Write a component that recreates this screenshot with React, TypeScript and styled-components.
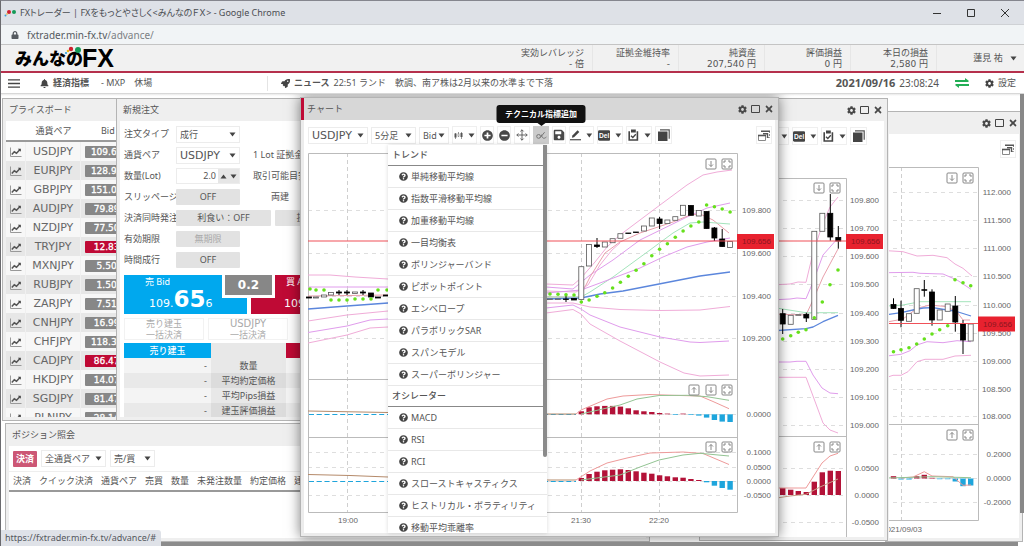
import React from 'react';
import styled, { createGlobalStyle, css } from 'styled-components';
import {
  FaBell,
  FaCog,
  FaLock,
  FaMinusCircle,
  FaPlusCircle,
  FaQuestionCircle,
  FaRocket,
  FaSave,
  FaTimes,
} from 'react-icons/fa';

const jp = `"Noto Sans", "Noto Sans CJK JP", sans-serif`;
const wide = `"DejaVu Sans", "Noto Sans CJK JP", sans-serif`;
const axisFont = `"Liberation Sans", sans-serif`;

const color = {
  text: '#555',
  dark: '#484848',
  blue: '#00a8ee',
  red: '#bf0a35',
  grey: '#878787',
  panel: '#efefef',
  button: '#e2e2e2',
  line: '#b4b4b4',
};

const GlobalStyle = createGlobalStyle`
  * { box-sizing: border-box; }
  body { margin: 0; background: #fff; }
  button, select, input { font: inherit; color: inherit; margin: 0; }
  ul, h2, h3, p { margin: 0; padding: 0; font-size: inherit; }
  ul { list-style: none; }
`;

/* ---------- page shell ---------- */

const Page = styled.div`
  display: flex;
  flex-direction: column;
  height: 100vh;
  overflow: hidden;
  border-left: 1px solid #6a6a6e;
  border-top: 1px solid #85868e;
  font: 9px/12px ${jp};
  color: ${color.text};
  background: #fff;
`;

const TitleBar = styled.div`
  display: flex;
  align-items: center;
  height: 24px;
  flex: none;
  padding: 0 13px 0 3px;
  background: #dee1e7;
  border-bottom: 1px solid #cfd1d5;
`;

const PageTitle = styled.div`
  flex: 1;
  margin-left: 3px;
  white-space: nowrap;
  color: #4a4d52;
  font-feature-settings: 'palt';
`;

const CaptionButtons = styled.div`
  display: flex;
  gap: 22px;
`;

const Plain = styled.button`
  display: flex;
  align-items: center;
  justify-content: center;
  padding: 0;
  border: 0;
  background: none;
`;

const AddressBar = styled.div`
  display: flex;
  align-items: center;
  gap: 8px;
  height: 20px;
  flex: none;
  padding-left: 10px;
  background: #f1f4f6;
  border-bottom: 1px solid #c4c4c4;
  font-size: 10px;
  color: #555a60;
`;

const Muted = styled.span`
  color: #7b7f84;
`;

const Header = styled.header`
  display: flex;
  align-items: center;
  height: 28px;
  flex: none;
  background: #f1f1f1;
  border-bottom: 2px solid #b5304c;
`;

const Logo = styled.a`
  display: flex;
  align-items: flex-end;
  position: relative;
  margin-left: 14px;
  color: #000;
  text-decoration: none;
  font: 900 17px/24px ${jp};
`;

const LogoFx = styled.span`
  font: 700 25px/26px ${axisFont};
  margin-left: -1px;
`;

const LogoDots = styled.svg`
  position: absolute;
  left: 48px;
  top: 0;
`;

const Stats = styled.div`
  display: flex;
  margin-left: auto;
  height: 100%;
`;

const Stat = styled.div`
  width: 86px;
  padding: 3px 8px 0 0;
  border-right: 1px solid #e6e6e6;
  text-align: right;
  white-space: nowrap;
  line-height: 11px;
  font-family: ${wide};
`;

const UserButton = styled(Plain)`
  width: 87px;
  padding: 0 7px 0 36px;
  gap: 7px;
  white-space: nowrap;
`;

const NewsBar = styled.div`
  display: flex;
  align-items: center;
  height: 21px;
  flex: none;
  padding: 0 8px 0 7px;
  border-bottom: 1px solid #d8d8d8;
  white-space: nowrap;
`;

const NewsItem = styled.div<{ $left: number }>`
  display: flex;
  align-items: center;
  gap: 4px;
  margin-left: ${(p) => p.$left}px;
`;

const NewsRegion = styled.div`
  display: flex;
  align-items: center;
  height: 15px;
  width: 247px;
`;

const NewsFeed = styled(NewsRegion)`
  flex: 1;
  border-left: 1px solid #e4e4e4;
  width: auto;
`;

const Clock = styled.div`
  display: flex;
  gap: 4px;
  font-size: 10px;
  b {
    font-size: 11px;
  }
`;

const GearButton = styled(Plain)`
  gap: 4px;
  margin-left: 16px;
`;

/* ---------- desktop and windows ---------- */

const Desktop = styled.main`
  position: relative;
  flex: 1;
  min-height: 0;
  overflow: hidden;
  background: linear-gradient(#e9e9e9, #fff 2px);
`;

const Win = styled.section<{
  $x: number;
  $y: number;
  $w: number;
  $h: number;
  $active?: boolean;
}>`
  position: absolute;
  left: ${(p) => p.$x}px;
  top: ${(p) => p.$y}px;
  width: ${(p) => p.$w}px;
  height: ${(p) => p.$h}px;
  display: flex;
  flex-direction: column;
  padding: 0 3px 3px;
  border: 1px solid ${color.line};
  background: ${color.panel};
  ${(p) =>
    p.$active &&
    css`
      background: #ececec;
      box-shadow: 0 0 12px rgba(0, 0, 0, 0.5);
    `}
`;

const WinHead = styled.div<{ $active?: boolean }>`
  display: flex;
  align-items: center;
  height: 22px;
  flex: none;
  margin: 0 -3px;
  padding: 0 4px 0 6px;
  color: #555;
  ${(p) =>
    p.$active &&
    css`
      background: #d7d7d7;
      border-left: 3px solid ${color.red};
      padding-left: 3px;
    `}
  h2 {
    flex: 1;
    font-weight: 400;
  }
`;

const WinActions = styled.div`
  display: flex;
  gap: 4px;
  color: ${color.dark};
`;

const WinBody = styled.div`
  flex: 1;
  min-height: 0;
  overflow: hidden;
  background: #fff;
`;

const WinBodyOpen = styled(WinBody)`
  overflow: visible;
`;

/* ---------- scrollbars ---------- */

const VThumb = styled.div`
  position: absolute;
  right: 0;
  top: 0;
  width: 4px;
  height: 419px;
  background: #888;
`;

const HThumb = styled.div`
  position: absolute;
  left: 0;
  right: 6px;
  bottom: 0;
  height: 4px;
  background: #8c8c8c;
`;

const StatusBubble = styled.div`
  position: absolute;
  left: 0;
  bottom: 0;
  height: 16px;
  padding: 0 5px 0 4px;
  border-radius: 0 3px 0 0;
  background: #dfe2e8;
  line-height: 16px;
  color: #55585e;
`;

/* ---------- form controls ---------- */

const SelectBox = styled.span<{ $w: number }>`
  display: grid;
  align-items: center;
  width: ${(p) => p.$w}px;
  height: 17px;
  border: 1px solid #ececec;
  background: #fff;
  & > * {
    grid-area: 1 / 1;
  }
  svg {
    justify-self: end;
    margin-right: 3px;
    pointer-events: none;
  }
`;

const BareSelect = styled.select<{ $wide?: boolean }>`
  appearance: none;
  width: 100%;
  height: 15px;
  padding: 0 0 0 3px;
  border: 0;
  background: none;
  font-family: ${(p) => (p.$wide ? wide : jp)};
  font-size: ${(p) => (p.$wide ? 11 : 9)}px;
  line-height: 15px;
`;

const Caret = ({ up }: { up?: boolean }) => (
  <svg width="7" height="5" viewBox="0 0 7 5" aria-hidden="true">
    <path d={up ? 'M0.5 4.5h6L3.5 0.5z' : 'M0.5 0.5h6L3.5 4.5z'} fill="#444" />
  </svg>
);

type PickProps = { label: string; value: string; w: number; wide?: boolean };
const Pick = ({ label, value, w, wide: isWide }: PickProps) => (
  <SelectBox $w={w}>
    <BareSelect aria-label={label} $wide={isWide} defaultValue={value}>
      <option>{value}</option>
    </BareSelect>
    <Caret />
  </SelectBox>
);

/* ---------- price board ---------- */

const BoardTable = styled.table`
  width: 132px;
  table-layout: fixed;
  border-collapse: separate;
  border-spacing: 0;
  th {
    height: 21px;
    padding: 0;
    font-weight: 400;
    border-bottom: 2px solid #9a9a9a;
  }
  th:last-child {
    text-align: left;
    padding-left: 20px;
  }
  td {
    height: 19px;
    padding: 0;
    border-right: 1px solid #f0f0f0;
  }
  tbody tr:nth-child(odd) {
    background: #f7f7f7;
  }
  tbody tr:nth-child(even) {
    background: #e7e7e7;
  }
`;

const IconCell = styled.td`
  svg {
    display: block;
    margin: 0 auto;
  }
`;

const PairCell = styled.td`
  font: 11px/14px ${wide};
  text-align: center;
  color: #666;
`;

const Quote = styled.div<{ $down?: boolean }>`
  width: 49px;
  height: 12px;
  margin-left: 4px;
  border-radius: 1px;
  background: ${(p) => (p.$down ? color.red : color.grey)};
  color: #fff;
  text-align: center;
  font: 9px/12px ${wide};
  -webkit-text-stroke: 0.3px #fff;
`;

const quotes: [string, string, boolean?][] = [
  ['USDJPY', '109.656'],
  ['EURJPY', '128.978'],
  ['GBPJPY', '151.006'],
  ['AUDJPY', '79.898'],
  ['NZDJPY', '77.506'],
  ['TRYJPY', '12.835', true],
  ['MXNJPY', '5.505'],
  ['RUBJPY', '1.507'],
  ['ZARJPY', '7.510'],
  ['CNHJPY', '16.995'],
  ['CHFJPY', '118.371'],
  ['CADJPY', '86.472', true],
  ['HKDJPY', '14.075'],
  ['SGDJPY', '81.473'],
  ['PLNJPY', '28.142'],
];

/* ---------- order form ---------- */

const OrderForm = styled.form`
  display: flex;
  flex-direction: column;
  gap: 5px;
  padding: 5px 4px 0;
`;

const FormRow = styled.div`
  display: flex;
  align-items: center;
  height: 16px;
  white-space: nowrap;
`;

const FieldLabel = styled.label`
  width: 52px;
  flex: none;
`;

const Side = styled.span<{ $left: number }>`
  margin-left: ${(p) => p.$left}px;
`;

const Toggle = styled.button<{ $w: number; $off?: boolean }>`
  flex: none;
  width: ${(p) => p.$w}px;
  height: 16px;
  padding: 0;
  border: 0;
  border-radius: 1px;
  background: ${color.button};
  color: ${(p) => (p.$off ? '#aaa' : color.text)};
  & + & {
    margin-left: 4px;
  }
`;

const LotBox = styled.span`
  display: flex;
  width: 64px;
  height: 16px;
  border: 1px solid #ececec;
  input {
    width: 41px;
    padding: 0 2px;
    border: 0;
    text-align: right;
    background: none;
  }
`;

const Stepper = styled.span`
  display: flex;
  flex: 1;
  align-items: center;
  justify-content: space-around;
  background: #e6e6e6;
`;

const Deal = styled.div`
  display: flex;
  position: relative;
  gap: 4px;
  margin-top: 2px;
`;

const DealButton = styled.button<{ $side: 'sell' | 'buy' }>`
  flex: none;
  width: 123px;
  height: 39px;
  padding: 0 0 0 21px;
  border: 0;
  background: ${(p) => (p.$side === 'sell' ? color.blue : color.red)};
  color: #fff;
  text-align: left;
`;

const DealName = styled.span<{ $indent?: boolean }>`
  display: block;
  line-height: 14px;
  margin-left: ${(p) => (p.$indent ? 14 : 0)}px;
`;

const DealPrice = styled.span<{ $indent?: boolean }>`
  display: block;
  margin-left: ${(p) => (p.$indent ? 12 : 4)}px;
  font: 11px/20px ${wide};
  strong {
    font-size: 23px;
  }
`;

const Spread = styled.span`
  position: absolute;
  left: 98px;
  top: -3px;
  width: 53px;
  height: 26px;
  border: 3px solid #fff;
  background: ${color.grey};
  color: #fff;
  text-align: center;
  font: 700 12px/20px ${wide};
`;

const BulkRow = styled.div`
  display: flex;
  gap: 4px;
  margin-top: -1px;
`;

const BulkButton = styled.button`
  display: flex;
  flex: none;
  flex-direction: column;
  align-items: center;
  justify-content: center;
  width: 80px;
  height: 22px;
  padding: 0;
  border: 0;
  outline: 1px solid #f2f2f2;
  outline-offset: -1px;
  background: #fff;
  color: #aaa;
  line-height: 11px;
`;

const WidePair = styled.span`
  font: 10px/11px ${wide};
`;

const Holding = styled.table`
  width: 248px;
  margin-top: -2px;
  table-layout: fixed;
  border-spacing: 0;
  th,
  td {
    height: 15px;
    padding: 0;
    font-weight: 400;
    text-align: center;
    line-height: 12px;
    background: #e8e8e8;
  }
  thead th:first-child {
    background: ${color.blue};
    color: #fff;
    font-weight: 500;
  }
  thead th:last-child {
    background: ${color.red};
    color: #fff;
  }
  td {
    text-align: right;
    padding-right: 4px;
    background: #f4f4f4;
  }
  tbody tr:nth-child(even) td {
    background: #e9e9e9;
  }
  tbody tr:nth-child(even) th {
    background: #dcdcdc;
  }
`;

/* ---------- positions ---------- */

const Filters = styled.div`
  display: flex;
  align-items: center;
  gap: 4px;
  height: 25px;
  padding-left: 4px;
`;

const CloseButton = styled.button`
  width: 24px;
  height: 16px;
  padding: 0;
  border: 0;
  border-radius: 1px;
  background: #cc5775;
  color: #fff;
  font-weight: 700;
`;

const PositionTable = styled.table`
  width: 100%;
  border-spacing: 0;
  border-top: 1px solid #eee;
  border-bottom: 2px solid #999;
  th {
    height: 18px;
    padding: 0 8px 0 0;
    font-weight: 400;
    text-align: left;
    white-space: nowrap;
  }
  th:first-child {
    padding-left: 4px;
  }
  th:last-child {
    width: 100%;
  }
`;

/* ---------- chart toolbar, menu and tooltip ---------- */

const Toolbar = styled.div`
  display: flex;
  align-items: center;
  gap: 3px;
  height: 28px;
  padding: 2px 3px 0 4px;
`;

const Lead = styled.span`
  width: 54px;
`;

const Spacer = styled.span`
  flex: 1;
`;

const Tool = styled.button<{ $w?: number; $on?: boolean }>`
  position: relative;
  display: flex;
  flex: none;
  align-items: center;
  justify-content: center;
  gap: 5px;
  width: ${(p) => p.$w ?? 16}px;
  height: 18px;
  padding: 0;
  border: 1px solid ${(p) => (p.$on ? '#cbcbcb' : '#efefef')};
  background: ${(p) => (p.$on ? '#cbcbcb' : '#fff')};
  color: ${color.dark};
`;

const Tip = styled.span`
  position: absolute;
  left: 50%;
  bottom: 20px;
  transform: translateX(-50%);
  width: 89px;
  border-radius: 3px;
  background: #111;
  color: #fff;
  font: 700 8px/18px ${jp};
  white-space: nowrap;
  &::after {
    content: '';
    position: absolute;
    left: 41px;
    top: 18px;
    border: 4px solid transparent;
    border-top: 3px solid #111;
    border-bottom: 0;
  }
`;

const Menu = styled.div`
  position: absolute;
  left: 87px;
  top: 47px;
  width: 159px;
  height: 388px;
  overflow: hidden;
  background: #fff;
  box-shadow: 0 0 4px rgba(0, 0, 0, 0.15);
  h3 {
    height: 21px;
    padding: 0 4px;
    border-bottom: 1px solid #888;
    font-weight: 500;
    line-height: 19px;
  }
`;

const MenuItem = styled.button`
  display: flex;
  align-items: center;
  gap: 3px;
  width: 100%;
  height: 22px;
  padding: 0 0 0 11px;
  border: 0;
  border-bottom: 1px solid #e8e8e8;
  background: none;
  white-space: nowrap;
`;

const MenuThumb = styled.div`
  position: absolute;
  right: 0;
  top: 0;
  width: 4px;
  height: 312px;
  border-radius: 0 0 2px 2px;
  background: #8a8a8a;
`;

const ChartSvg = styled.svg`
  display: block;
  flex: none;
  font: 8px ${axisFont};
`;

const ChartCrop = styled.div`
  display: flex;
  justify-content: flex-end;
`;

/* ---------- icons ---------- */

const TrendIcon = () => (
  <svg width="12" height="10" viewBox="0 0 12 10" fill="none" stroke="#555">
    <path d="M0.500 0.500v9h11" stroke="#999" />
    <path d="M1.800 7.500L4.300 4.800l2.200 1.400L10 2.500" strokeWidth="1.500" />
    <path d="M7.800 1.700h3v3z" fill="#444" stroke="none" />
  </svg>
);

const BoxIcon = () => (
  <svg width="9" height="8" viewBox="0 0 9 8">
    <path d="M0.5 0.5h8v7h-8z" fill="none" stroke="#444" />
  </svg>
);

const CandleIcon = () => (
  <svg width="9" height="9" viewBox="0 0 9 9">
    <path d="M1.500 2v6M4.500 1v5M7.500 1v7" stroke="#999" />
    <path d="M0.500 2.500h2v4h-2zM6.500 2h2v4h-2z" fill="#555" />
    <path d="M4 2.500h1v3H4z" fill="#fff" stroke="#777" strokeWidth=".6" />
  </svg>
);

const MoveIcon = () => (
  <svg width="12" height="12" viewBox="0 0 12 12" fill="none" stroke="#555" strokeWidth=".9">
    <path d="M6 0.8v10.4M0.8 6h10.4" />
    <path d="M4.4 2.4L6 .8l1.600 1.600M4.400 9.600L6 11.200l1.600-1.600M2.400 4.400L.8 6l1.600 1.600M9.600 4.400L11.200 6 9.600 7.600" />
  </svg>
);

const IndicatorIcon = () => (
  <svg width="11" height="9" viewBox="0 0 11 9" fill="none" stroke="#777">
    <circle cx="2.600" cy="5.400" r="1.900" />
    <path d="M4.300 6.600L8.600 1.200M5.400 3.600c.4 2.600 1.600 4 3 3.600 1-.3 1.500-.8 2-1.200" />
  </svg>
);

const PencilIcon = () => (
  <svg width="12" height="12" viewBox="0 0 12 12">
    <path d="M2 8.800L2.500 6.500 8 1l1.800 1.800L4.300 8.300z" fill="#444" />
    <path d="M0 11h12" stroke="#444" strokeWidth="1.200" />
  </svg>
);

const DelIcon = () => (
  <svg width="13" height="11" viewBox="0 0 13 11">
    <rect width="13" height="11" rx="1.500" fill="#444" />
    <text x="6.500" y="8" fill="#fff" fontSize="7" fontWeight="700" textAnchor="middle" fontFamily="Liberation Sans, sans-serif">
      Del
    </text>
  </svg>
);

const ClipIcon = () => (
  <svg width="11" height="12" viewBox="0 0 11 12">
    <path d="M1.200 2.200v8.800h8.200V2.200" fill="none" stroke="#444" strokeWidth="1.600" />
    <path d="M3 0.500h4.800v3H3z" fill="#444" />
    <path d="M3 6.800l1.800 1.700 3-3.300" fill="none" stroke="#444" strokeWidth="1.300" />
  </svg>
);

const StackIcon = () => (
  <svg width="12" height="12" viewBox="0 0 12 12">
    <path d="M0 2.500h9.500V12H0z" fill="#444" />
    <path d="M2 .8h9.200v9" fill="none" stroke="#555" strokeWidth="1.200" />
  </svg>
);

const TileIcon = () => (
  <svg width="12" height="11" viewBox="0 0 12 11" fill="none" stroke="#888">
    <path d="M0.500 5.500h7v5h-7z" />
    <path d="M0 5.500h8" stroke="#555" strokeWidth="1.600" />
    <path d="M11.500 1v6.500H9.500" strokeDasharray="2 1" />
    <path d="M3 1.200h9M5 3.700h4.500V8" stroke="#555" strokeWidth="1.400" />
  </svg>
);

const ArrowsIcon = () => (
  <svg width="14" height="10" viewBox="0 0 14 10" fill="#22ae55">
    <path d="M0 2h10V0l4 2.900-1 1H0zM14 8H4v2L0 7.100l1-1h13z" />
  </svg>
);

/* ---------- chart drawing ---------- */

type Pt = [number, number];
type Candle = { x: number; top: number; bottom: number; hi?: number; lo?: number; up?: boolean };

const hollow = (x: number, top: number, bottom: number): Candle => ({ x, top, bottom, up: true });
const solid = (x: number, top: number, bottom: number, hi = top, lo = bottom): Candle => ({ x, top, bottom, hi, lo });

const pink = '#f0acd8';
const violet = '#e09cec';
const rose = '#e8a0ac';
const mint = '#a4e4bc';
const blueLine = '#5b86dc';

const Curve = ({ pts, c, w = 1 }: { pts: Pt[]; c: string; w?: number }) => (
  <polyline points={pts.map((p) => p.join(',')).join(' ')} fill="none" stroke={c} strokeWidth={w} strokeLinejoin="round" />
);

const Dots = ({ pts }: { pts: Pt[] }) => (
  <g fill="#66e01c">
    {pts.map(([x, y]) => (
      <circle key={`${x}-${y}`} cx={x} cy={y} r="1.800" />
    ))}
  </g>
);

const Candles = ({ items }: { items: Candle[] }) => (
  <g>
    {items.map((k) => (
      <g key={k.x}>
        {!k.up && <path d={`M${k.x} ${k.hi}V${k.lo}`} stroke="#000" />}
        <rect
          x={k.x - 2.5}
          y={k.top}
          width="5"
          height={Math.max(0.5, k.bottom - k.top)}
          fill={k.up ? '#fff' : '#000'}
          stroke={k.up ? '#555' : '#000'}
          strokeWidth=".8"
        />
      </g>
    ))}
  </g>
);

const Bars = ({ zero, items }: { zero: number; items: Pt[] }) => (
  <g>
    {items.map(([x, v]) => (
      <rect
        key={x}
        x={x - 2.7}
        width="5.400"
        y={v < 0 ? zero : zero - v}
        height={Math.abs(v)}
        fill={v < 0 ? '#1ea5dc' : '#b31238'}
      />
    ))}
  </g>
);

const HGrid = ({ x1, x2, ys }: { x1: number; x2: number; ys: number[] }) => (
  <path d={ys.map((y) => `M${x1} ${y}H${x2}`).join('')} stroke="#dedede" strokeDasharray="4 4" />
);

const VGrid = ({ y1, y2, xs }: { y1: number; y2: number; xs: number[] }) => (
  <path d={xs.map((x) => `M${x} ${y1}V${y2}`).join('')} stroke="#cfcfcf" strokeDasharray="4 3" />
);

const AxisLabels = ({ x, items }: { x: number; items: [string, number][] }) => (
  <g fill="#666" textAnchor="end">
    {items.map(([t, y]) => (
      <text key={t + y} x={x} y={y + 3}>
        {t}
      </text>
    ))}
  </g>
);

const PaneButton = ({ x, y, kind }: { x: number; y: number; kind: 'up' | 'down' | 'full' }) => (
  <g transform={`translate(${x - 5.5} ${y - 5.5})`} fill="none" stroke="#888">
    <rect x=".5" y=".5" width="10" height="10" rx="1" fill="#fff" />
    {kind === 'up' && <path d="M5.500 8.500V3M3.500 5l2-2 2 2" />}
    {kind === 'down' && <path d="M5.500 2.500V8M3.500 6l2 2 2-2" />}
    {kind === 'full' && <path d="M2.500 4.500v-2h2M6.500 2.500h2v2M8.500 6.500v2h-2M4.500 8.500h-2v-2" />}
  </g>
);

const LastPrice = ({ x1, x2, y }: { x1: number; x2: number; y: number }) => (
  <g>
    <path d={`M${x1} ${y}H${x2}`} stroke="#f05058" strokeWidth="1.200" />
    <rect x={x2} y={y - 7} width="37" height="15" fill="#e8222f" />
    <text x={x2 + 34} y={y + 3} textAnchor="end" fill="#8c1620">
      109.656
    </text>
  </g>
);

const step = (i: number) => Math.round((581.3 + i * 7.83) * 10) / 10;

const MainChart = () => (
  <ChartSvg width="470" height="384" viewBox="304 148 470 384" role="img" aria-label="USDJPY 5分足">
    <HGrid x1={308} x2={737} ys={[210.5, 253.5, 296.5, 338.5, 414.5, 452.5, 467.5, 481.5, 495.5]} />
    <VGrid y1={153} y2={512} xs={[347.5, 581.5, 659.5]} />
    <path d="M308.500 512.500V153.500H737.500V512.500ZM308 379.500H737M308 437.500H737" fill="none" stroke="#bbb" />
    <Curve c={pink} pts={[[308, 275], [330, 275], [355, 277], [388, 279], [546, 284], [573, 285], [581, 278], [595, 262], [607, 247], [620, 235], [640, 220], [660, 205], [687, 185], [703, 175], [717, 172], [732, 170]]} />
    <Curve c={violet} pts={[[308, 287], [388, 287], [546, 287], [573, 289], [590, 275], [613, 260], [640, 240], [687, 217], [707, 208], [730, 203]]} />
    <Curve c={rose} pts={[[308, 296], [388, 295], [546, 297], [580, 297], [590, 277], [605, 253], [620, 242], [640, 233], [673, 222], [690, 215], [700, 214], [713, 220], [729, 233]]} />
    <Curve c={pink} pts={[[546, 291], [576, 292], [588, 285], [600, 265], [612, 250], [620, 243]]} />
    <Curve c={mint} pts={[[546, 297], [581, 297], [590, 292], [613, 277], [650, 250], [673, 233], [690, 223], [703, 222], [730, 224]]} />
    <Curve c={violet} pts={[[546, 293], [581, 290], [600, 283], [640, 268], [663, 257], [687, 247], [707, 242], [730, 238]]} />
    <Curve c={blueLine} w={1.3} pts={[[308, 309], [347, 306], [388, 303], [546, 299], [581, 298], [600, 294], [623, 291], [659, 284], [700, 276], [730, 272]]} />
    <Curve c={pink} pts={[[308, 321], [347, 315], [388, 311], [546, 303], [573, 303], [590, 307], [620, 309.5], [660, 310.5], [700, 310], [730, 306.5]]} />
    <Curve c={violet} pts={[[308, 332.5], [347, 326], [370, 320], [388, 319], [546, 308], [573, 305], [581, 309], [590, 315], [620, 327], [660, 337], [690, 342], [700, 342.5], [729, 341]]} />
    <Curve c={pink} pts={[[308, 343], [347, 335], [370, 328], [388, 327], [546, 313], [573, 309.5], [581, 314], [590, 324], [620, 341], [660, 362], [684, 373], [700, 376], [729, 375]]} />
    <Candles
      items={[
        solid(309, 297, 298), hollow(316, 297, 298), hollow(324, 295, 297), hollow(331, 292.5, 295),
        solid(339, 292, 293, 290, 295), solid(347, 292, 293, 290, 295), hollow(355, 292, 293.5), solid(363, 292, 293, 290, 295),
        solid(371, 293, 297), solid(378, 297, 298), solid(386, 295, 296),
        hollow(550, 299, 299.5), hollow(558, 299, 299.5), solid(566, 299, 299.5, 295, 302), solid(574, 298.5, 300),
        hollow(step(0), 266.7, 299.5), hollow(step(1), 244.5, 266), solid(step(2), 245, 246.5, 238, 248),
        hollow(step(3), 242, 247), hollow(step(4), 238.7, 242.7), hollow(step(5), 233.7, 238.3),
        solid(step(6), 233, 233.5), solid(step(7), 232, 232.5), hollow(step(8), 226, 231), hollow(step(9), 218, 226),
        solid(step(10), 219, 223.5, 217, 229), hollow(step(11), 220, 223.5), hollow(step(12), 216.7, 220.3),
        hollow(step(13), 205.3, 215.3), solid(step(14), 205.5, 215.3), hollow(step(15), 210.5, 216),
        solid(step(16), 211.5, 228.5), solid(step(17), 228, 238, 227, 241), solid(step(18), 239, 246.5, 229, 247), hollow(step(19), 241.5, 247.5),
      ]}
    />
    <Dots
      pts={[
        [310, 289], [316, 290], [324, 290], [331, 300], [339, 300], [347, 300], [355, 299], [363, 299], [371, 299], [378, 290], [387, 290],
        [550, 294], [558, 294.3], [566, 294.7], [574, 295],
        [step(0), 302], [step(1), 300], [step(2), 296.3], [step(3), 292.7], [step(4), 288], [step(5), 282.3], [step(6), 276.3],
        [step(7), 270.3], [step(8), 263.7], [step(9), 255.7], [step(10), 249.3], [step(11), 243.7], [step(12), 237.3],
        [step(13), 231], [step(14), 226], [step(15), 222], [step(16), 205], [step(17), 206.7], [step(18), 209], [step(19), 212],
      ]}
    />
    <path d="M309 414.500H576M309 481.500H576" stroke="#1ea5dc" strokeWidth="1.200" strokeDasharray="5 2.800" />
    <Bars
      zero={414.3}
      items={[3, 7, 8, 8.4, 8.4, 7.7, 6, 4, 3, 2.3, 1.3, 0.7, -0.7, 0.7, -0.7, -1.3, -3.3, -5.7, -7.3, -7.7].map((v, i): Pt => [step(i), v])}
    />
    <Bars
      zero={481}
      items={[3, 7, 9.3, 10.7, 11.3, 11.7, 11, 9.7, 8.3, 7.3, 5.7, 4.7, 3.7, 3.3, 2, 1, -1.3, -4.7, -7, -8.7].map((v, i): Pt => [step(i), v])}
    />
    <Curve c="#b58a6a" pts={[[308, 411], [388, 412.5], [546, 414], [576, 414]]} />
    <Curve c="#ee9a9a" pts={[[576, 414], [581, 410], [607, 399], [623, 396], [650, 394.5], [673, 395.3], [700, 396], [713, 401.5], [729, 408.7]]} />
    <Curve c="#93c493" pts={[[581, 414], [620, 405], [637, 399], [659, 395.5], [687, 395.3], [707, 396.7], [729, 400.3]]} />
    <Curve c="#b58a6a" pts={[[308, 474.5], [350, 475.5], [388, 477], [546, 480], [576, 480]]} />
    <Curve c="#ee9a9a" pts={[[576, 480], [590, 471], [607, 463], [627, 458], [650, 453], [683, 452], [703, 453.5], [729, 464.5]]} />
    <Curve c="#93c493" pts={[[581, 480], [620, 475], [640, 467], [659, 460], [683, 455], [700, 453.3], [729, 456]]} />
    <PaneButton x={711} y={164} kind="down" />
    <PaneButton x={727} y={164} kind="full" />
    <PaneButton x={694} y={390} kind="up" />
    <PaneButton x={711} y={390} kind="down" />
    <PaneButton x={727} y={390} kind="full" />
    <PaneButton x={711} y={447} kind="up" />
    <PaneButton x={727} y={447} kind="full" />
    <AxisLabels
      x={771}
      items={[['109.800', 210], ['109.600', 253], ['109.400', 296], ['109.200', 338], ['0.0000', 414], ['0.1000', 452], ['0.0500', 467], ['0.0000', 481], ['-0.0500', 495]]}
    />
    <LastPrice x1={308} x2={737} y={241} />
    <g fill="#666" textAnchor="middle">
      <text x="348" y="523">19:00</text>
      <text x="581" y="523">21:30</text>
      <text x="659" y="523">22:20</text>
    </g>
  </ChartSvg>
);

const SecondChart = () => (
  <ChartSvg width="180" height="389" viewBox="703 149 180 389" role="img" aria-label="USDJPY 1時間足">
    <HGrid x1={703} x2={846} ys={[200.5, 228.5, 256.5, 284.5, 313.5, 341.5, 369.5, 397.5, 425.5, 468.5, 495.5, 522.5]} />
    <path d="M703 178.500H846.500V538M703 436.500H846" fill="none" stroke="#bbb" />
    <Curve c={pink} pts={[[770, 285], [790, 284], [798, 282], [806, 282.3], [813, 253], [823, 223], [830, 207], [838, 197]]} />
    <Curve c={violet} pts={[[770, 300], [790, 299], [797, 298], [806, 298.7], [813, 282], [823, 255], [838, 238]]} />
    <Curve c={rose} pts={[[770, 314], [806, 315], [813, 300], [823, 277], [838, 249]]} />
    <Curve c={mint} pts={[[770, 307], [806, 312.7], [838, 312.7]]} />
    <Curve c={blueLine} w={1.3} pts={[[770, 331], [806, 328.7], [813, 327], [823, 321.7], [838, 315.3]]} />
    <Curve c={violet} pts={[[770, 362], [790, 362], [797, 361.3], [806, 361.3], [813, 375], [822, 388], [830, 393], [838, 393.7]]} />
    <Curve c={pink} pts={[[770, 377.3], [806, 377.3], [813, 396], [823, 423], [830, 430], [838, 433]]} />
    <Candles
      items={[
        solid(782.7, 313.7, 324, 309, 334), hollow(790.7, 315.3, 324.3), hollow(798.3, 314.7, 315.3),
        solid(806.3, 314.3, 318, 312.7, 322), hollow(814.3, 231.3, 319.3), hollow(822.3, 213.3, 231.3),
        solid(830.3, 213.3, 237, 194, 240.7), solid(838.3, 237.5, 241, 226, 248.7),
      ]}
    />
    <Dots pts={[[782.7, 339], [790.7, 335.7], [798.3, 332.3], [806, 329.7], [814.3, 317.7], [822.3, 302], [830, 284.7], [838, 270]]} />
    <Bars zero={495} items={[[782.7, 7], [790.7, 5.3], [798.3, 4], [806.3, 3], [814.3, 13.3], [822.3, 22.7], [830.3, 24.3], [838.3, 24]]} />
    <Curve c="#ee9a9a" pts={[[770, 488], [806, 488], [813, 477], [822, 463], [830, 456], [838, 453.3]]} />
    <Curve c="#c9a08a" pts={[[770, 499], [790, 496], [806, 494.3], [820, 487], [838, 479]]} />
    <PaneButton x={819} y={188} kind="down" />
    <PaneButton x={835} y={188} kind="full" />
    <PaneButton x={819} y={447} kind="up" />
    <PaneButton x={835} y={447} kind="full" />
    <AxisLabels
      x={879}
      items={[['109.800', 200], ['109.700', 228], ['109.600', 256], ['109.500', 284], ['109.400', 313], ['109.300', 341], ['109.200', 369], ['109.100', 397], ['109.000', 425], ['0.0500', 468], ['0.0000', 495], ['-0.0500', 522]]}
    />
    <LastPrice x1={703} x2={846} y={241} />
  </ChartSvg>
);

const ThirdChart = () => (
  <ChartSvg width="158" height="380" viewBox="861 162 158 380" role="img" aria-label="USDJPY 日足">
    <HGrid x1={861} x2={978} ys={[192.5, 220.5, 248.5, 276.5, 305.5, 333.5, 361.5, 389.5, 416.5, 454.5, 478.5, 502.5]} />
    <VGrid y1={167} y2={520} xs={[901.5]} />
    <path d="M861 167.500H978.500V520.500H861M861 424.500H978" fill="none" stroke="#bbb" />
    <Curve c={pink} pts={[[887, 250.7], [903, 251.7], [917, 256], [933, 255.3], [947, 257.7], [955, 264], [963, 268.3], [972, 276]]} />
    <Curve c={violet} pts={[[887, 272.7], [913, 272.3], [920, 273.3], [943, 274], [957, 280], [971, 289.3]]} />
    <Curve c={mint} pts={[[887, 306], [903, 305], [920, 301.7], [971, 301.7]]} />
    <Curve c={rose} pts={[[887, 322], [903, 319], [917, 308.3], [930, 305], [947, 306.7], [957, 312], [963, 320], [970, 320]]} />
    <Curve c={blueLine} w={1.3} pts={[[887, 314.7], [901, 312.7], [913, 310], [923, 308], [933, 307.7], [947, 310], [955, 311], [971, 316]]} />
    <Curve c={violet} pts={[[887, 356], [901, 354.3], [910, 350.7], [917, 345], [927, 341.7], [943, 342.7], [957, 340.7], [971, 341.7]]} />
    <Curve c={pink} pts={[[887, 377.3], [893, 375.3], [901, 375.3], [908, 371.7], [917, 361.7], [925, 359.3], [943, 359.3], [955, 356], [971, 355.3]]} />
    <Candles
      items={[
        hollow(885.5, 301, 305), solid(893.5, 304.5, 308.5, 298.3, 309), solid(901, 308.5, 320.3, 300.7, 327.3),
        hollow(909, 313.7, 321.3), hollow(916.7, 288.7, 313.3), solid(924.3, 289.7, 290.3, 280, 296.7),
        solid(932, 292, 320, 289.3, 325.7), hollow(939.7, 310, 320), hollow(947.7, 304, 311.3),
        solid(955.3, 306, 322, 296, 331.7), solid(963, 324, 340, 320, 354), hollow(970.7, 324, 341),
      ]}
    />
    <Dots pts={[[893.5, 351.7], [901, 349.7], [909, 347.7], [916.7, 344], [924.3, 339], [932, 334], [939.7, 329.7], [947.7, 325.7], [955, 279.7], [963, 282.7], [970.7, 285.7]]} />
    <Bars
      zero={478.5}
      items={[[886, 4], [893.5, 2.3], [901, -1], [909, -1], [916.7, 2.3], [924.3, 3.7], [932, 0.7], [939.7, -0.7], [947.7, -0.7], [955.3, -3], [963, -7.7], [970.7, -7]]}
    />
    <Curve c="#ee9a9a" pts={[[901, 478], [913, 477], [924.3, 471.7], [932, 476], [953, 476.7], [963, 485.3], [971, 485]]} />
    <Curve c="#93c493" pts={[[887, 478], [932, 476.7], [971, 477.7]]} />
    <PaneButton x={952} y={178} kind="down" />
    <PaneButton x={968} y={178} kind="full" />
    <PaneButton x={952} y={435} kind="up" />
    <PaneButton x={968} y={435} kind="full" />
    <AxisLabels
      x={1011}
      items={[['112.000', 192], ['111.500', 220], ['111.000', 248], ['110.500', 276], ['110.000', 305], ['109.500', 333], ['109.000', 361], ['108.500', 389], ['108.000', 416], ['0.2000', 454], ['0.0000', 478], ['-0.2000', 502]]}
    />
    <LastPrice x1={861} x2={978} y={323.5} />
    <text x="902" y="532" fill="#666" textAnchor="middle">2021/09/03</text>
  </ChartSvg>
);

/* ---------- composed pieces ---------- */

const HeadActions = () => (
  <WinActions>
    <Plain aria-label="設定"><FaCog size={9} /></Plain>
    <Plain aria-label="最大化"><BoxIcon /></Plain>
    <Plain aria-label="閉じる"><FaTimes size={10} /></Plain>
  </WinActions>
);

const trend = ['単純移動平均線', '指数平滑移動平均線', '加重移動平均線', '一目均衡表', 'ボリンジャーバンド', 'ピボットポイント', 'エンベロープ', 'パラボリックSAR', 'スパンモデル', 'スーパーボリンジャー'];
const oscillators = ['MACD', 'RSI', 'RCI', 'スローストキャスティクス', 'ヒストリカル・ボラティリティ', '移動平均乖離率'];

const MenuList = ({ items }: { items: string[] }) => (
  <ul>
    {items.map((t) => (
      <li key={t}>
        <MenuItem type="button">
          <FaQuestionCircle size={9} color="#444" />
          {t}
        </MenuItem>
      </li>
    ))}
  </ul>
);

const TailTools = () => (
  <>
    <Tool aria-label="削除" $w={26}><DelIcon /><Caret /></Tool>
    <Tool aria-label="適用" $w={26}><ClipIcon /><Caret /></Tool>
    <Tool aria-label="複製" $w={17}><StackIcon /></Tool>
  </>
);

const stats = [
  ['実効レバレッジ', '- 倍'],
  ['証拠金維持率', '-'],
  ['純資産', '207,540 円'],
  ['評価損益', '0 円'],
  ['本日の損益', '2,580 円'],
];

export default function App() {
  return (
    <Page>
      <GlobalStyle />
      <TitleBar>
        <svg width="13" height="8" viewBox="0 0 13 8">
          <circle cx="1.500" cy="6.500" r="1" fill="#3aa0d8" />
          <circle cx="5" cy="3" r="2" fill="#d2202f" />
          <circle cx="10" cy="3" r="2" fill="#159a58" />
          <circle cx="3" cy="5" r=".8" fill="#e8b020" />
        </svg>
        <PageTitle>FXトレーダー | FXをもっとやさしく&lt;みんなのＦＸ&gt; - Google Chrome</PageTitle>
        <CaptionButtons>
          <Plain aria-label="最小化"><svg width="12" height="10"><path d="M2 5.500h8" stroke="#333" /></svg></Plain>
          <Plain aria-label="最大化"><svg width="12" height="10"><path d="M2.500 1.500h7v7h-7z" fill="none" stroke="#333" /></svg></Plain>
          <Plain aria-label="閉じる"><svg width="12" height="10"><path d="M2 1l8 8M10 1l-8 8" stroke="#333" /></svg></Plain>
        </CaptionButtons>
      </TitleBar>
      <AddressBar>
        <FaLock size={8} />
        <span>fxtrader.min-fx.tv<Muted>/advance/</Muted></span>
      </AddressBar>

      <Header>
        <Logo href="#">
          みんなの
          <LogoFx>FX</LogoFx>
          <LogoDots width="20" height="10" viewBox="0 0 20 10" aria-hidden="true">
            <circle cx="3" cy="8" r="1" fill="#1d9ad6" />
            <circle cx="5" cy="6" r="1.300" fill="#e8b41c" />
            <circle cx="8" cy="4" r="2.200" fill="#d0202f" />
            <circle cx="15" cy="5" r="3" fill="#159a58" />
          </LogoDots>
        </Logo>
        <Stats>
          {stats.map(([k, v]) => (
            <Stat key={k}>
              <div>{k}</div>
              <div>{v}</div>
            </Stat>
          ))}
          <UserButton>蓮見 祐<Caret /></UserButton>
        </Stats>
      </Header>

      <NewsBar>
        <Plain aria-label="メニュー">
          <svg width="12" height="9" viewBox="0 0 12 9"><path d="M0 .8h12M0 4.500h12M0 8.200h12" stroke="#444" strokeWidth="1.300" /></svg>
        </Plain>
        <NewsRegion>
          <NewsItem $left={20}><FaBell size={9} color="#444" /><b>経済指標</b></NewsItem>
          <NewsItem $left={12}>- MXP　休場</NewsItem>
        </NewsRegion>
        <NewsFeed>
          <NewsItem $left={13}><FaRocket size={9} color="#444" /><b>ニュース</b></NewsItem>
          <NewsItem $left={4}>22:51 ランド　軟調、南ア株は2月以来の水準まで下落</NewsItem>
        </NewsFeed>
        <Clock><b>2021/09/16</b><span>23:08:24</span></Clock>
        <NewsItem $left={16}><ArrowsIcon /></NewsItem>
        <GearButton><FaCog size={9} color="#444" />設定</GearButton>
      </NewsBar>

      <Desktop>
        <Win $x={1} $y={4} $w={140} $h={323}>
          <WinHead><h2>プライスボード</h2></WinHead>
          <WinBody>
            <BoardTable>
              <colgroup><col width="20" /><col width="55" /><col /></colgroup>
              <thead><tr><th /><th>通貨ペア</th><th>Bid</th></tr></thead>
              <tbody>
                {quotes.map(([pair, bid, down]) => (
                  <tr key={pair}>
                    <IconCell><TrendIcon /></IconCell>
                    <PairCell>{pair}</PairCell>
                    <td><Quote $down={down}>{bid}</Quote></td>
                  </tr>
                ))}
              </tbody>
            </BoardTable>
          </WinBody>
        </Win>

        <Win $x={4} $y={329} $w={645} $h={119}>
          <WinHead><h2>ポジション照会</h2></WinHead>
          <WinBody>
            <Filters>
              <CloseButton>決済</CloseButton>
              <Pick label="通貨ペア" value="全通貨ペア" w={65} />
              <Pick label="売買" value="売/買" w={45} />
            </Filters>
            <PositionTable>
              <thead>
                <tr>
                  {['決済', 'クイック決済', '通貨ペア', '売買', '数量', '未発注数量', '約定価格', '建玉損益'].map((t) => <th key={t}>{t}</th>)}
                </tr>
              </thead>
            </PositionTable>
          </WinBody>
        </Win>

        <Win $x={115} $y={4} $w={220} $h={323}>
          <WinHead><h2>新規注文</h2></WinHead>
          <WinBody>
            <OrderForm>
              <FormRow><FieldLabel>注文タイプ</FieldLabel><Pick label="注文タイプ" value="成行" w={64} /></FormRow>
              <FormRow>
                <FieldLabel>通貨ペア</FieldLabel><Pick label="通貨ペア" value="USDJPY" w={64} wide />
                <Side $left={13}>1 Lot 証拠金</Side>
              </FormRow>
              <FormRow>
                <FieldLabel htmlFor="lot">数量(Lot)</FieldLabel>
                <LotBox><input id="lot" defaultValue="2.0" /><Stepper><Caret up /><Caret /></Stepper></LotBox>
                <Side $left={13}>取引可能目安</Side>
              </FormRow>
              <FormRow>
                <FieldLabel>スリッページ</FieldLabel><Toggle type="button" $w={64}>OFF</Toggle>
                <Side $left={31}>両建</Side>
              </FormRow>
              <FormRow>
                <FieldLabel>決済同時発注</FieldLabel><Toggle type="button" $w={95}>利食い：OFF</Toggle><Toggle type="button" $w={70}>損切り</Toggle>
              </FormRow>
              <FormRow><FieldLabel>有効期限</FieldLabel><Toggle type="button" $w={64} $off>無期限</Toggle></FormRow>
              <FormRow><FieldLabel>時間成行</FieldLabel><Toggle type="button" $w={64}>OFF</Toggle></FormRow>
              <Deal>
                <DealButton type="button" $side="sell">
                  <DealName>売 Bid</DealName>
                  <DealPrice>109.<strong>65</strong>6</DealPrice>
                </DealButton>
                <DealButton type="button" $side="buy">
                  <DealName $indent>買 Ask</DealName>
                  <DealPrice $indent>109.<strong>65</strong>8</DealPrice>
                </DealButton>
                <Spread>0.2</Spread>
              </Deal>
              <BulkRow>
                <BulkButton type="button"><span>売り建玉</span><span>一括決済</span></BulkButton>
                <BulkButton type="button"><WidePair>USDJPY</WidePair><span>一括決済</span></BulkButton>
              </BulkRow>
              <Holding>
                <colgroup><col width="87" /><col width="75" /><col /></colgroup>
                <thead><tr><th>売り建玉</th><th /><th /></tr></thead>
                <tbody>
                  {['数量', '平均約定価格', '平均Pips損益', '建玉評価損益'].map((t) => (
                    <tr key={t}><td>-</td><th>{t}</th><td /></tr>
                  ))}
                </tbody>
              </Holding>
            </OrderForm>
          </WinBody>
        </Win>

        <Win $x={884} $y={17} $w={138} $h={431}>
          <WinHead><h2 /><HeadActions /></WinHead>
          <WinBody>
            <Toolbar><Spacer /><Tool aria-label="整列"><TileIcon /></Tool></Toolbar>
            <ChartCrop><ThirdChart /></ChartCrop>
          </WinBody>
        </Win>

        <Win $x={698} $y={4} $w={189} $h={443}>
          <WinHead><h2 /><HeadActions /></WinHead>
          <WinBody>
            <Toolbar><Lead /><Tool aria-label="描画" $w={25}><PencilIcon /><Caret /></Tool><TailTools /></Toolbar>
            <SecondChart />
          </WinBody>
        </Win>

        <Win $x={299} $y={3} $w={479} $h={440} $active>
          <WinHead $active><h2>チャート</h2><HeadActions /></WinHead>
          <WinBodyOpen>
            <Toolbar>
              <Pick label="通貨ペア" value="USDJPY" w={60} wide />
              <Pick label="足種" value="5分足" w={45} />
              <Pick label="レート" value="Bid" w={30} />
              <Tool aria-label="チャート種類" $w={25}><CandleIcon /><Caret /></Tool>
              <Tool aria-label="拡大" $w={14}><FaPlusCircle size={11} /></Tool>
              <Tool aria-label="縮小" $w={14}><FaMinusCircle size={11} /></Tool>
              <Tool aria-label="移動"><MoveIcon /></Tool>
              <Tool aria-label="テクニカル指標追加" $on><IndicatorIcon /><Tip>テクニカル指標追加</Tip></Tool>
              <Tool aria-label="保存" $w={14}><FaSave size={12} /></Tool>
              <Tool aria-label="描画" $w={25}><PencilIcon /><Caret /></Tool>
              <TailTools />
              <Spacer />
              <Tool aria-label="整列"><TileIcon /></Tool>
            </Toolbar>
            <MainChart />
          </WinBodyOpen>
          <Menu>
            <h3>トレンド</h3>
            <MenuList items={trend} />
            <h3>オシレーター</h3>
            <MenuList items={oscillators} />
            <MenuThumb />
          </Menu>
        </Win>

        <HThumb />
        <VThumb />
        <StatusBubble>https://fxtrader.min-fx.tv/advance/#</StatusBubble>
      </Desktop>
    </Page>
  );
}
